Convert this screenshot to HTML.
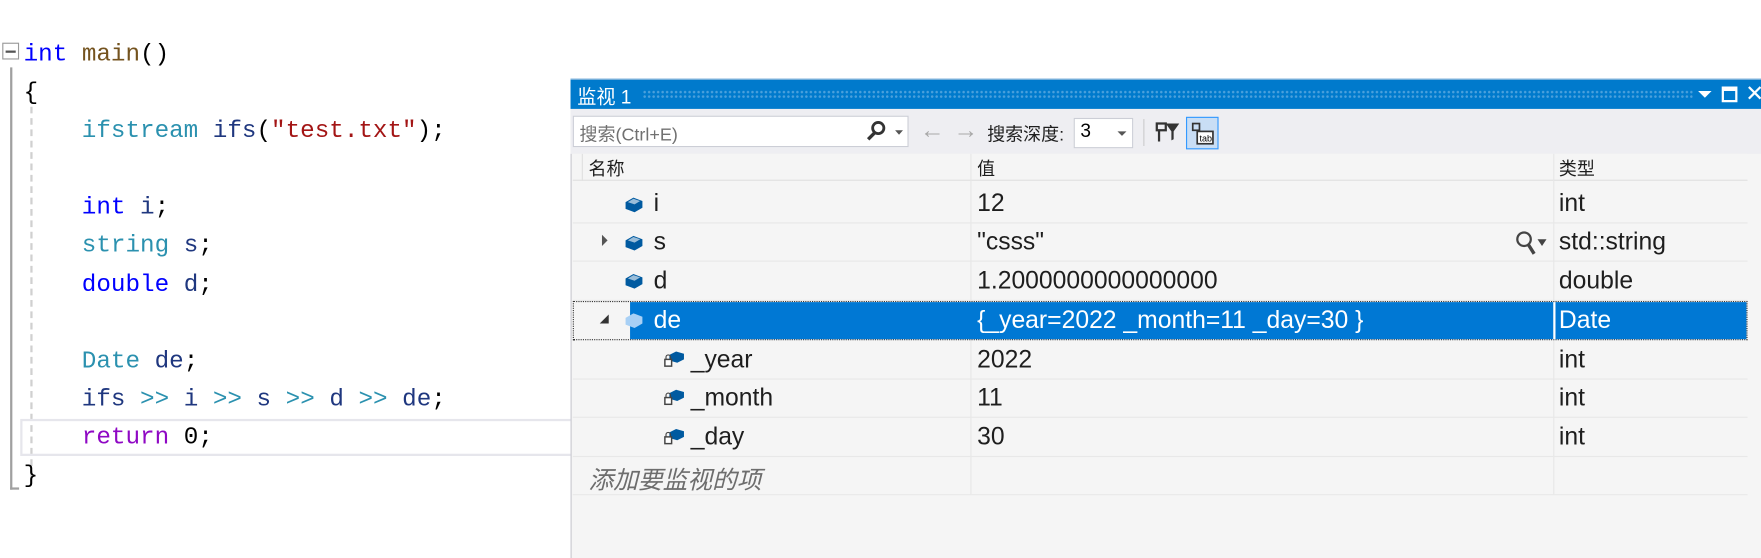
<!DOCTYPE html>
<html><head><meta charset="utf-8"><style>
*{margin:0;padding:0;box-sizing:border-box}
body{width:1761px;height:558px;background:#fff;position:relative;overflow:hidden;font-family:"Liberation Sans","Noto Sans CJK SC",sans-serif}
#w{position:absolute;left:0;top:0;width:1568px;height:497px;transform:scale(1.1231);transform-origin:0 0;overflow:hidden}
.code{position:absolute;font-family:"Liberation Mono","Noto Sans CJK SC",monospace;font-size:21.6px;white-space:pre;line-height:34.1px}
.kw{color:#0000ff}.ty{color:#2b91af}.fn{color:#74531f}.id{color:#1f377f}.st{color:#a31515}.rt{color:#8f08c4}.op{color:#2b91af}
.ab{position:absolute}
.row{position:absolute;left:510px;width:1046px;height:34px;border-bottom:1px solid #e8e8e8;font-size:22px;color:#1e1e1e}
.row span{position:absolute;top:3px}
</style></head><body><div id="w">
<div class="ab" style="left:2px;top:38px;width:15px;height:15px;border:1px solid #999;background:#fff"></div>
<div class="ab" style="left:5px;top:45px;width:9px;height:2px;background:#555"></div>
<div class="ab" style="left:9px;top:60px;width:2px;height:376px;background:#a0a0a0"></div>
<div class="ab" style="left:9px;top:434px;width:8px;height:2px;background:#a0a0a0"></div>
<div class="ab" style="left:27px;top:95px;width:0;height:330px;border-left:2px dashed #d0d0d0"></div>
<div class="ab" style="left:18px;top:373px;width:492px;height:33px;border:2px solid #e6e6ec"></div>
<div class="code" style="left:21px;top:32px"><span class="kw">int</span> <span class="fn">main</span>()
<span>{</span>
    <span class="ty">ifstream</span> <span class="id">ifs</span>(<span class="st">"test.txt"</span>);

    <span class="kw">int</span> <span class="id">i</span>;
    <span class="ty">string</span> <span class="id">s</span>;
    <span class="kw">double</span> <span class="id">d</span>;

    <span class="ty">Date</span> <span class="id">de</span>;
    <span class="id">ifs</span> <span class="op">&gt;&gt;</span> <span class="id">i</span> <span class="op">&gt;&gt;</span> <span class="id">s</span> <span class="op">&gt;&gt;</span> <span class="id">d</span> <span class="op">&gt;&gt;</span> <span class="id">de</span>;
    <span class="rt">return</span> 0;
}</div>
<div class="ab" style="left:508px;top:70px;width:1060px;height:427px;background:#f5f5f5;border-left:1px solid #c8c8d0"></div>
<div class="ab" style="left:508px;top:70px;width:1060px;height:27px;background:#007acc;border-top:1px solid #9bc0e0"></div>
<div class="ab" style="left:514px;top:72px;color:#fff;font-size:17px">监视 1</div>
<div class="ab" style="left:572px;top:80px;width:935px;height:8px;background-image:radial-gradient(#4aa0dc 1px,transparent 1.2px);background-size:4px 4px"></div>
<div class="ab" style="left:1512px;top:81px;width:0;height:0;border-left:6px solid transparent;border-right:6px solid transparent;border-top:6px solid #fff"></div>
<div class="ab" style="left:1533px;top:77px;width:14px;height:14px;border:2px solid #fff;border-top-width:4px"></div>
<div class="ab" style="left:1554px;top:71px;color:#fff;font-size:20px">✕</div>
<div class="ab" style="left:508px;top:97px;width:1060px;height:40px;background:#eeeef2"></div>
<div class="ab" style="left:510px;top:103px;width:299px;height:28px;background:#fff;border:1px solid #ccced6"></div>
<div class="ab" style="left:516px;top:106px;font-size:16px;color:#717171">搜索(Ctrl+E)</div>
<svg class="ab" style="left:770px;top:107px" width="40" height="20"><circle cx="12" cy="7" r="5" fill="none" stroke="#333" stroke-width="2.5"/><line x1="9" y1="11" x2="3" y2="17" stroke="#333" stroke-width="3"/><path d="M27 9h7l-3.5 4z" fill="#555"/></svg>
<div class="ab" style="left:819px;top:103px;font-size:22px;color:#a8a8a8">←</div>
<div class="ab" style="left:849px;top:103px;font-size:22px;color:#a8a8a8">→</div>
<div class="ab" style="left:879px;top:106px;font-size:16px;color:#1e1e1e">搜索深度:</div>
<div class="ab" style="left:956px;top:105px;width:53px;height:27px;background:#fff;border:1px solid #ccced6"></div>
<div class="ab" style="left:962px;top:107px;font-size:17px">3</div>
<div class="ab" style="left:995px;top:117px;border-left:4px solid transparent;border-right:4px solid transparent;border-top:4px solid #555"></div>
<div class="ab" style="left:1018px;top:106px;width:1px;height:24px;background:#ccc"></div>
<svg class="ab" style="left:1028px;top:106px" width="24" height="24"><path d="M2 4h8v6H2z M4 10v10" stroke="#333" fill="none" stroke-width="2"/><path d="M10 4h12l-5 7v7l-2 1v-8z" fill="#333"/></svg>
<div class="ab" style="left:1056px;top:104px;width:29px;height:29px;border:1px solid #3399ff;background:#c9def5"></div>
<svg class="ab" style="left:1060px;top:108px" width="22" height="22"><rect x="2" y="2" width="6" height="6" fill="none" stroke="#333" stroke-width="1.5"/><rect x="6" y="9" width="14" height="11" fill="#fff" stroke="#333" stroke-width="1.5"/><text x="8" y="18" font-size="8" font-family="Liberation Sans">tab</text></svg>
<div class="ab" style="left:510px;top:137px;width:1046px;height:24px;background:#f5f5f5;border-bottom:1px solid #e0e0e0"></div>
<div class="ab" style="left:518px;top:137px;width:1px;height:24px;background:#e0e0e0"></div>
<div class="ab" style="left:524px;top:137px;font-size:16px;color:#1e1e1e">名称</div>
<div class="ab" style="left:864px;top:137px;width:1px;height:303px;background:#e6e6e6"></div>
<div class="ab" style="left:870px;top:137px;font-size:16px;color:#1e1e1e">值</div>
<div class="ab" style="left:1383px;top:137px;width:1px;height:303px;background:#e6e6e6"></div>
<div class="ab" style="left:1388px;top:137px;font-size:16px;color:#1e1e1e">类型</div>
<div class="row" style="top:165px"><span style="left:72px">i</span><span style="left:360px">12</span><span style="left:878px">int</span></div>
<div class="row" style="top:199px"><span style="left:72px">s</span><span style="left:360px">"csss"</span><span style="left:878px">std::string</span></div>
<div class="row" style="top:234px"><span style="left:72px">d</span><span style="left:360px">1.2000000000000000</span><span style="left:878px">double</span></div>
<div class="ab" style="left:510px;top:268px;width:1046px;height:35px;border:1px dotted #333"></div>
<div class="ab" style="left:561px;top:269px;width:994px;height:33px;background:#0078d4"></div>
<div class="ab" style="left:1383px;top:269px;width:2px;height:33px;background:#fff"></div>
<div class="row" style="top:269px;border:none;color:#fff"><span style="left:72px">de</span><span style="left:360px">{_year=2022 _month=11 _day=30 }</span><span style="left:878px">Date</span></div>
<div class="row" style="top:304px"><span style="left:105px">_year</span><span style="left:360px">2022</span><span style="left:878px">int</span></div>
<div class="row" style="top:338px"><span style="left:105px">_month</span><span style="left:360px">11</span><span style="left:878px">int</span></div>
<div class="row" style="top:373px"><span style="left:105px">_day</span><span style="left:360px">30</span><span style="left:878px">int</span></div>
<div class="row" style="top:407px"><span style="left:14px;font-style:italic;color:#6d6d6d">添加要监视的项</span></div>
<svg class="ab" style="left:555px;top:174px" width="20" height="130">
<g fill="#005aa0"><path d="M2 6l7-4 8 3v6l-7 4-8-3z"/><path d="M2 40l7-4 8 3v6l-7 4-8-3z"/><path d="M2 74l7-4 8 3v6l-7 4-8-3z"/></g>
<g fill="#fff" opacity=".6"><path d="M4 6l5-3 6 2-5 3z"/><path d="M4 40l5-3 6 2-5 3z"/><path d="M4 74l5-3 6 2-5 3z"/></g>
<path d="M2 109l7-4 8 3v6l-7 4-8-3z" fill="#a8d0f5"/>
</svg>
<svg class="ab" style="left:589px;top:311px" width="22" height="90">
<g><path d="M7 5l6-3 7 2v5l-6 3-7-2z" fill="#005aa0"/><rect x="3" y="9" width="6" height="6" fill="#fff" stroke="#444" stroke-width="1.3"/><path d="M4 9V7a2 2 0 014 0v2" fill="none" stroke="#444"/></g>
<g transform="translate(0,34)"><path d="M7 5l6-3 7 2v5l-6 3-7-2z" fill="#005aa0"/><rect x="3" y="9" width="6" height="6" fill="#fff" stroke="#444" stroke-width="1.3"/><path d="M4 9V7a2 2 0 014 0v2" fill="none" stroke="#444"/></g>
<g transform="translate(0,69)"><path d="M7 5l6-3 7 2v5l-6 3-7-2z" fill="#005aa0"/><rect x="3" y="9" width="6" height="6" fill="#fff" stroke="#444" stroke-width="1.3"/><path d="M4 9V7a2 2 0 014 0v2" fill="none" stroke="#444"/></g>
</svg>
<div class="ab" style="left:536px;top:209px;border-top:5px solid transparent;border-bottom:5px solid transparent;border-left:5px solid #555"></div>
<div class="ab" style="left:534px;top:280px;border-left:8px solid transparent;border-bottom:8px solid #333"></div>
<svg class="ab" style="left:1348px;top:204px" width="32" height="28"><circle cx="9" cy="9" r="6" fill="none" stroke="#444" stroke-width="2"/><line x1="13" y1="14" x2="18" y2="22" stroke="#444" stroke-width="3"/><path d="M21 9h8l-4 6z" fill="#444"/></svg>
</div></body></html>
